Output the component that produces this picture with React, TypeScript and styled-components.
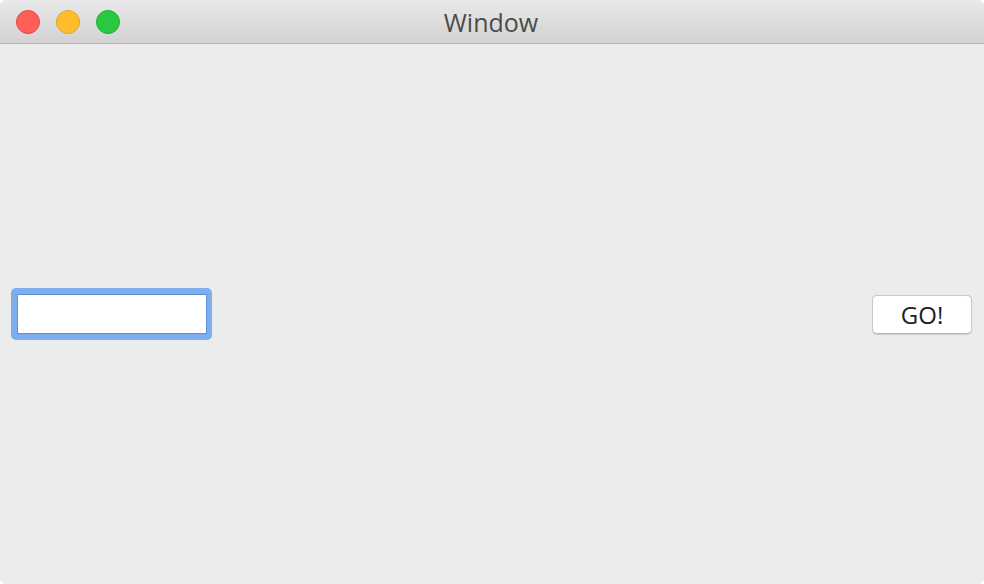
import styled, { createGlobalStyle } from "styled-components";

const GlobalStyle = createGlobalStyle`
  html, body {
    margin: 0;
    padding: 0;
    background: #ffffff;
  }
  body {
    font-family: "Helvetica Neue", "Liberation Sans", Arial, sans-serif;
  }
`;

const Frame = styled.div`
  width: 984px;
  height: 584px;
  display: flex;
  flex-direction: column;
  border-radius: 6px;
  overflow: hidden;
  background: #ececec;
`;

const TitleBar = styled.div`
  position: relative;
  height: 43px;
  flex-shrink: 0;
  display: flex;
  align-items: center;
  justify-content: center;
  background: linear-gradient(to bottom, #e9e9e9, #d2d2d2);
  border-bottom: 1px solid #b4b4b4;
`;

const Lights = styled.div`
  position: absolute;
  left: 16px;
  top: 10px;
  display: flex;
  gap: 16px;
`;

const Light = styled.span<{ $fill: string; $edge: string }>`
  width: 24px;
  height: 24px;
  border-radius: 50%;
  background: ${(p) => p.$fill};
  border: 1px solid ${(p) => p.$edge};
  box-sizing: border-box;
`;

const Title = styled.div`
  font-family: "Open Sans", "Liberation Sans", Arial, sans-serif;
  font-size: 25px;
  color: #4b4b4b;
  margin-left: -2px;
`;

const Body = styled.div`
  flex: 1;
  display: flex;
  align-items: center;
  justify-content: space-between;
  padding: 0 12px 0 11px;
`;

const FocusRing = styled.div`
  display: flex;
  padding: 6px 5px 6px 6px;
  border-radius: 5px;
  background: #7caef0;
`;

const Input = styled.input`
  width: 190px;
  height: 40px;
  box-sizing: border-box;
  margin: 0;
  padding: 0 6px;
  border: 1px solid #5b8fdb;
  background: #ffffff;
  outline: none;
  border-radius: 0;
  font-size: 20px;
`;

const GoButton = styled.button`
  width: 100px;
  height: 39px;
  box-sizing: border-box;
  margin: 0;
  padding: 0;
  border: 1px solid #c9c9c9;
  border-bottom-color: #b8b8b8;
  border-radius: 5px;
  background: #ffffff;
  box-shadow: 0 0.5px 1px rgba(0, 0, 0, 0.15);
  font-family: "Open Sans", "Liberation Sans", Arial, sans-serif;
  font-size: 24px;
  color: #1e1e1e;
  cursor: pointer;
`;

export default function App() {
  return (
    <>
      <GlobalStyle />
      <Frame>
        <TitleBar>
          <Lights>
            <Light $fill="#ff5f57" $edge="#e5463f" />
            <Light $fill="#ffbd2e" $edge="#e0a327" />
            <Light $fill="#28c940" $edge="#1fae30" />
          </Lights>
          <Title>Window</Title>
        </TitleBar>
        <Body>
          <FocusRing>
            <Input type="text" />
          </FocusRing>
          <GoButton>GO!</GoButton>
        </Body>
      </Frame>
    </>
  );
}
